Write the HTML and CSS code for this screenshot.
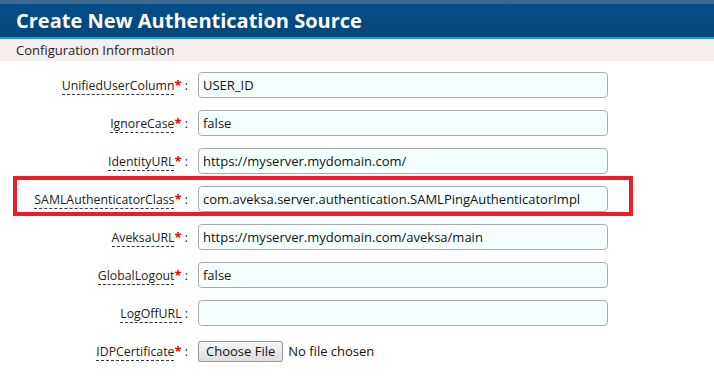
FILE: index.html
```html
<!DOCTYPE html>
<html lang="en">
  <head>
    <meta charset="UTF-8">
    <title>Create New Authentication Source</title>
    <link rel="stylesheet" href="styles.css">
  </head>
  <body>
    <div class="page-header">
      <h1>Create New Authentication Source</h1>
    </div>
    <div class="section-title">Configuration Information</div>

    <form class="config-form">
      <div class="row">
        <label class="field-label"><span class="term">UnifiedUserColumn</span><span class="req">*</span> :</label>
        <input type="text" class="field-input" value="USER_ID">
      </div>
      <div class="row">
        <label class="field-label"><span class="term">IgnoreCase</span><span class="req">*</span> :</label>
        <input type="text" class="field-input" value="false">
      </div>
      <div class="row">
        <label class="field-label"><span class="term">IdentityURL</span><span class="req">*</span> :</label>
        <input type="text" class="field-input" value="https://myserver.mydomain.com/">
      </div>
      <div class="row highlight">
        <label class="field-label"><span class="term">SAMLAuthenticatorClass</span><span class="req">*</span> :</label>
        <input type="text" class="field-input" value="com.aveksa.server.authentication.SAMLPingAuthenticatorImpl">
      </div>
      <div class="row">
        <label class="field-label"><span class="term">AveksaURL</span><span class="req">*</span> :</label>
        <input type="text" class="field-input" value="https://myserver.mydomain.com/aveksa/main">
      </div>
      <div class="row">
        <label class="field-label"><span class="term">GlobalLogout</span><span class="req">*</span> :</label>
        <input type="text" class="field-input" value="false">
      </div>
      <div class="row">
        <label class="field-label"><span class="term">LogOffURL</span> :</label>
        <input type="text" class="field-input" value="">
      </div>
      <div class="row">
        <label class="field-label"><span class="term">IDPCertificate</span><span class="req">*</span> :</label>
        <div class="file-picker">
          <span class="file-button">Choose File</span>
          <span class="file-name">No file chosen</span>
        </div>
      </div>
    </form>
  </body>
</html>
```

FILE: styles.css
```css
body {
  margin: 0;
  font-family: "Open Sans", "DejaVu Sans", sans-serif;
  background-color: #fff;
  color: #111;
}
.page-header {
  height: 33px;
  border-top: 4px solid #3c6890;
  border-bottom: 2px solid #1ea6c6;
  background: linear-gradient(#064f8a, #02467a);
  padding-left: 16px;
}
.page-header h1 {
  margin: 0;
  font-size: 20px;
  line-height: 33px;
  font-weight: bold;
  color: #fff;
}
.section-title {
  height: 22px;
  line-height: 22px;
  background-color: #f6eded;
  padding-left: 16px;
  font-size: 13px;
  color: #222;
}
.config-form {
  padding-top: 5px;
}
.row {
  display: flex;
  align-items: center;
  height: 38px;
}
.field-label {
  width: 188px;
  text-align: right;
  font-size: 12.3px;
  color: #222;
  white-space: nowrap;
}
.term {
  border-bottom: 1px dashed #333;
}
.req {
  color: #e00;
  font-size: 13px;
  font-weight: bold;
}
.field-input {
  margin-left: 10px;
  width: 410px;
  height: 26px;
  box-sizing: border-box;
  border: 1px solid #aaa;
  border-radius: 4px;
  background-color: #f6ffff;
  padding: 0 4px;
  font-family: "Open Sans", "DejaVu Sans", sans-serif;
  font-size: 13px;
  color: #111;
}
.highlight {
  position: relative;
}
.highlight::after {
  content: "";
  position: absolute;
  left: 13px;
  top: -4px;
  width: 612px;
  height: 32px;
  border: 4px solid #ee1c25;
}
.file-picker {
  margin-left: 10px;
  display: flex;
  align-items: center;
  font-size: 13px;
}
.file-button {
  height: 21px;
  box-sizing: border-box;
  line-height: 19px;
  padding: 0 7px;
  border: 1px solid #999;
  border-radius: 2px;
  background: linear-gradient(#f6f6f6, #dedede);
  color: #111;
}
.file-name {
  margin-left: 5px;
  color: #111;
}
```
